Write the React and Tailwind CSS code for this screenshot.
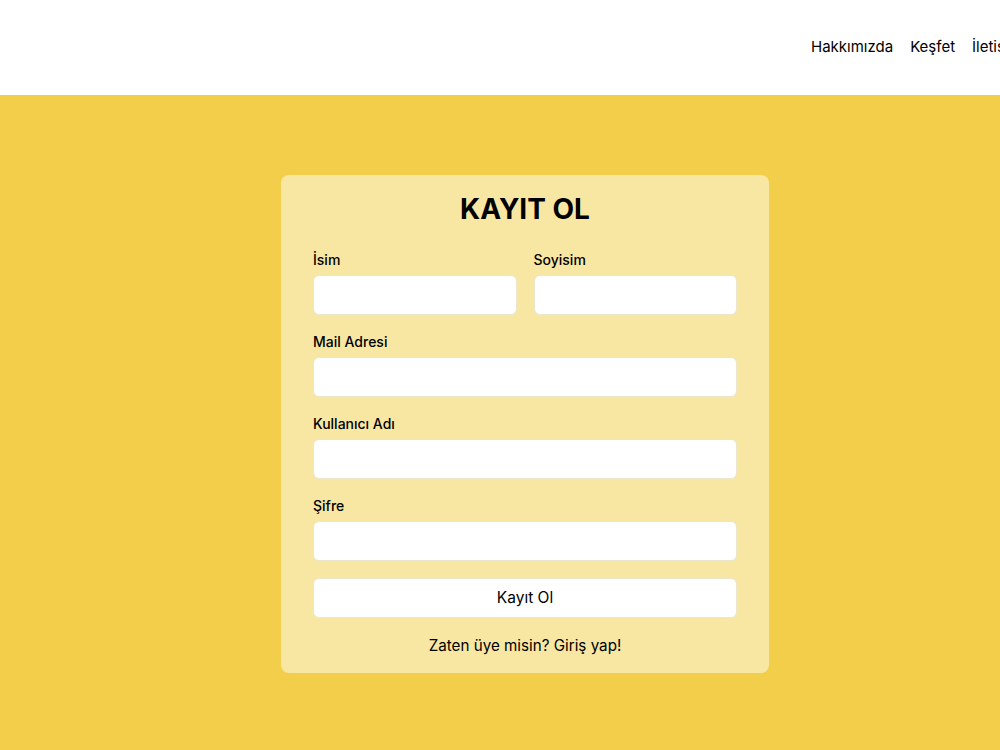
export default function App() {
  const font = { fontFamily: "Inter, 'Noto Sans', sans-serif" };
  const Field = ({ label, className = "" }) => (
    <div className={"flex flex-col " + className}>
      <label className="text-sm leading-5 font-medium text-black mb-[5px]">{label}</label>
      <input className="h-10 w-full rounded-md border border-[#ece6cf] bg-white px-3 outline-none" />
    </div>
  );
  return (
    <div className="w-screen h-[750px] overflow-hidden">
      <div className="w-[1050px] min-h-[750px] flex flex-col bg-[#f2ce4a]" style={font}>
        <header className="h-[95px] bg-white flex items-center">
          <nav className="ml-[811px] flex gap-[17px] whitespace-nowrap text-[15px] text-black">
            <a>Hakkımızda</a>
            <a>Keşfet</a>
            <a>İletişim</a>
          </nav>
        </header>
        <main className="flex justify-center pt-20">
          <div className="w-[488px] rounded-lg bg-[#f8e7a3] px-8 pt-4 pb-[15px]">
            <h1 className="text-[28px] leading-9 font-bold text-center text-black">KAYIT OL</h1>
            <div className="mt-[23px] grid grid-cols-2 gap-[17px]">
              <Field label="İsim" />
              <Field label="Soyisim" />
            </div>
            <Field label="Mail Adresi" className="mt-[17px]" />
            <Field label="Kullanıcı Adı" className="mt-[17px]" />
            <Field label="Şifre" className="mt-[17px]" />
            <button className="mt-[17px] h-10 w-full rounded-md border border-[#ece6cf] bg-white text-[15.5px] text-black">
              Kayıt Ol
            </button>
            <p className="mt-4 text-center text-[15.2px] leading-6 text-black">Zaten üye misin? Giriş yap!</p>
          </div>
        </main>
      </div>
    </div>
  );
}
